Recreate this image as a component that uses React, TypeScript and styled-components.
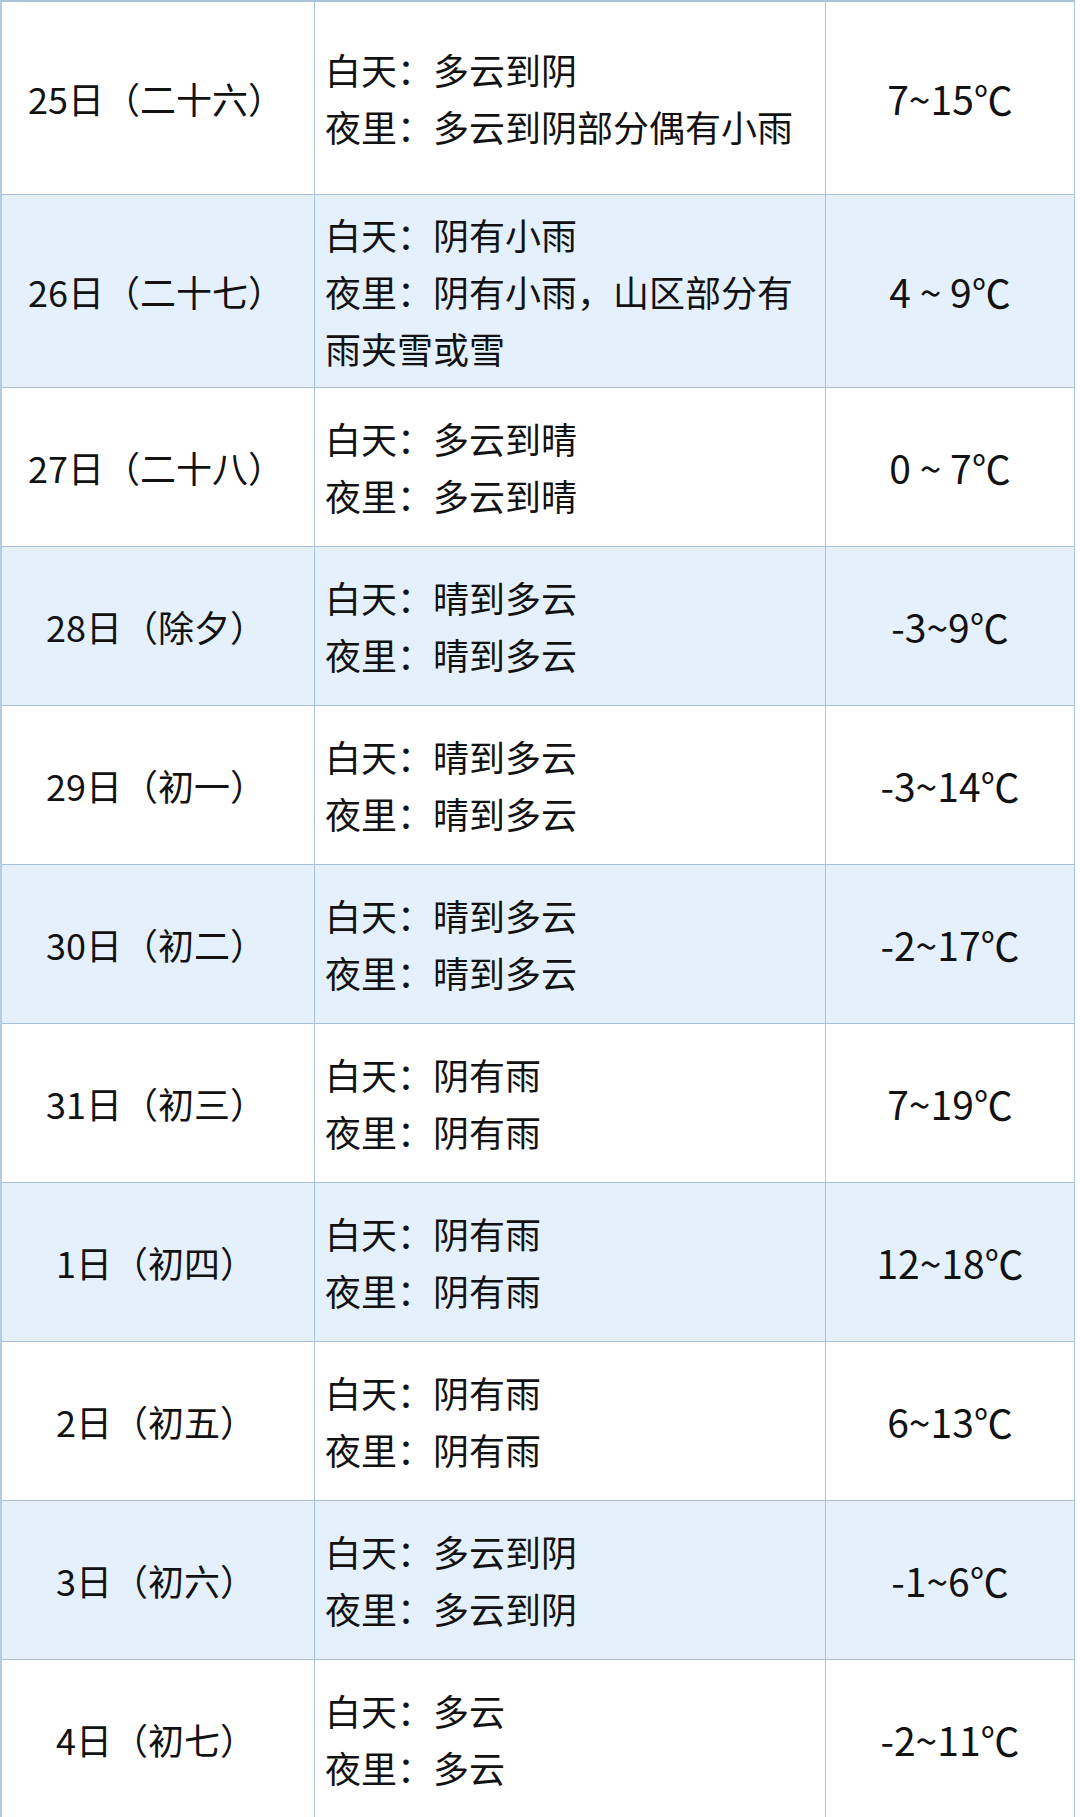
import React from 'react';
import styled, { createGlobalStyle } from 'styled-components';

const GlobalStyle = createGlobalStyle`
  html, body {
    margin: 0;
    padding: 0;
    background: #ffffff;
  }
  body {
    font-family: "Noto Sans CJK SC", "Noto Sans", sans-serif;
    color: #121212;
  }
`;

const Table = styled.div`
  width: 1075px;
  height: 1817px;
  overflow: hidden;
  border-top: 2px solid #a9c3da;
  border-left: 2px solid #b5cbe0;
  box-sizing: border-box;
`;

const Row = styled.div<{ $h: number; $shade: boolean }>`
  display: grid;
  grid-template-columns: 313px 511px 1fr;
  height: ${(p) => p.$h}px;
  box-sizing: border-box;
  border-bottom: 1.5px solid #a9c1d6;
  background: ${(p) => (p.$shade ? '#e4f0fc' : '#ffffff')};
`;

const Cell = styled.div`
  display: flex;
  align-items: center;
  box-sizing: border-box;
  border-right: 1.5px solid #a9c1d6;
  font-size: 36px;
  line-height: 57px;
`;

const DateCell = styled(Cell)`
  justify-content: center;
  padding-right: 4px;
`;

const WeatherCell = styled(Cell)`
  padding: 0 12px 0 10px;
`;

const TempCell = styled(Cell)`
  justify-content: center;
  font-size: 39px;
`;

const Lines = styled.div`
  display: flex;
  flex-direction: column;
`;

const Line = styled.div`
  white-space: normal;
`;

type Day = {
  date: string;
  day: string;
  night: string;
  temp: string;
  h: number;
};

const days: Day[] = [
  { date: '25日（二十六）', day: '多云到阴', night: '多云到阴部分偶有小雨', temp: '7~15℃', h: 193 },
  { date: '26日（二十七）', day: '阴有小雨', night: '阴有小雨，山区部分有雨夹雪或雪', temp: '4 ~ 9℃', h: 193 },
  { date: '27日（二十八）', day: '多云到晴', night: '多云到晴', temp: '0 ~ 7℃', h: 159 },
  { date: '28日（除夕）', day: '晴到多云', night: '晴到多云', temp: '-3~9℃', h: 159 },
  { date: '29日（初一）', day: '晴到多云', night: '晴到多云', temp: '-3~14℃', h: 159 },
  { date: '30日（初二）', day: '晴到多云', night: '晴到多云', temp: '-2~17℃', h: 159 },
  { date: '31日（初三）', day: '阴有雨', night: '阴有雨', temp: '7~19℃', h: 159 },
  { date: '1日（初四）', day: '阴有雨', night: '阴有雨', temp: '12~18℃', h: 159 },
  { date: '2日（初五）', day: '阴有雨', night: '阴有雨', temp: '6~13℃', h: 159 },
  { date: '3日（初六）', day: '多云到阴', night: '多云到阴', temp: '-1~6℃', h: 159 },
  { date: '4日（初七）', day: '多云', night: '多云', temp: '-2~11℃', h: 159 },
];

const App: React.FC = () => {
  return (
    <>
      <GlobalStyle />
      <Table>
        {days.map((d, i) => (
          <Row key={d.date} $h={d.h} $shade={i % 2 === 1}>
            <DateCell>{d.date}</DateCell>
            <WeatherCell>
              <Lines>
                <Line>白天：{d.day}</Line>
                <Line>夜里：{d.night}</Line>
              </Lines>
            </WeatherCell>
            <TempCell>{d.temp}</TempCell>
          </Row>
        ))}
      </Table>
    </>
  );
};

export default App;
